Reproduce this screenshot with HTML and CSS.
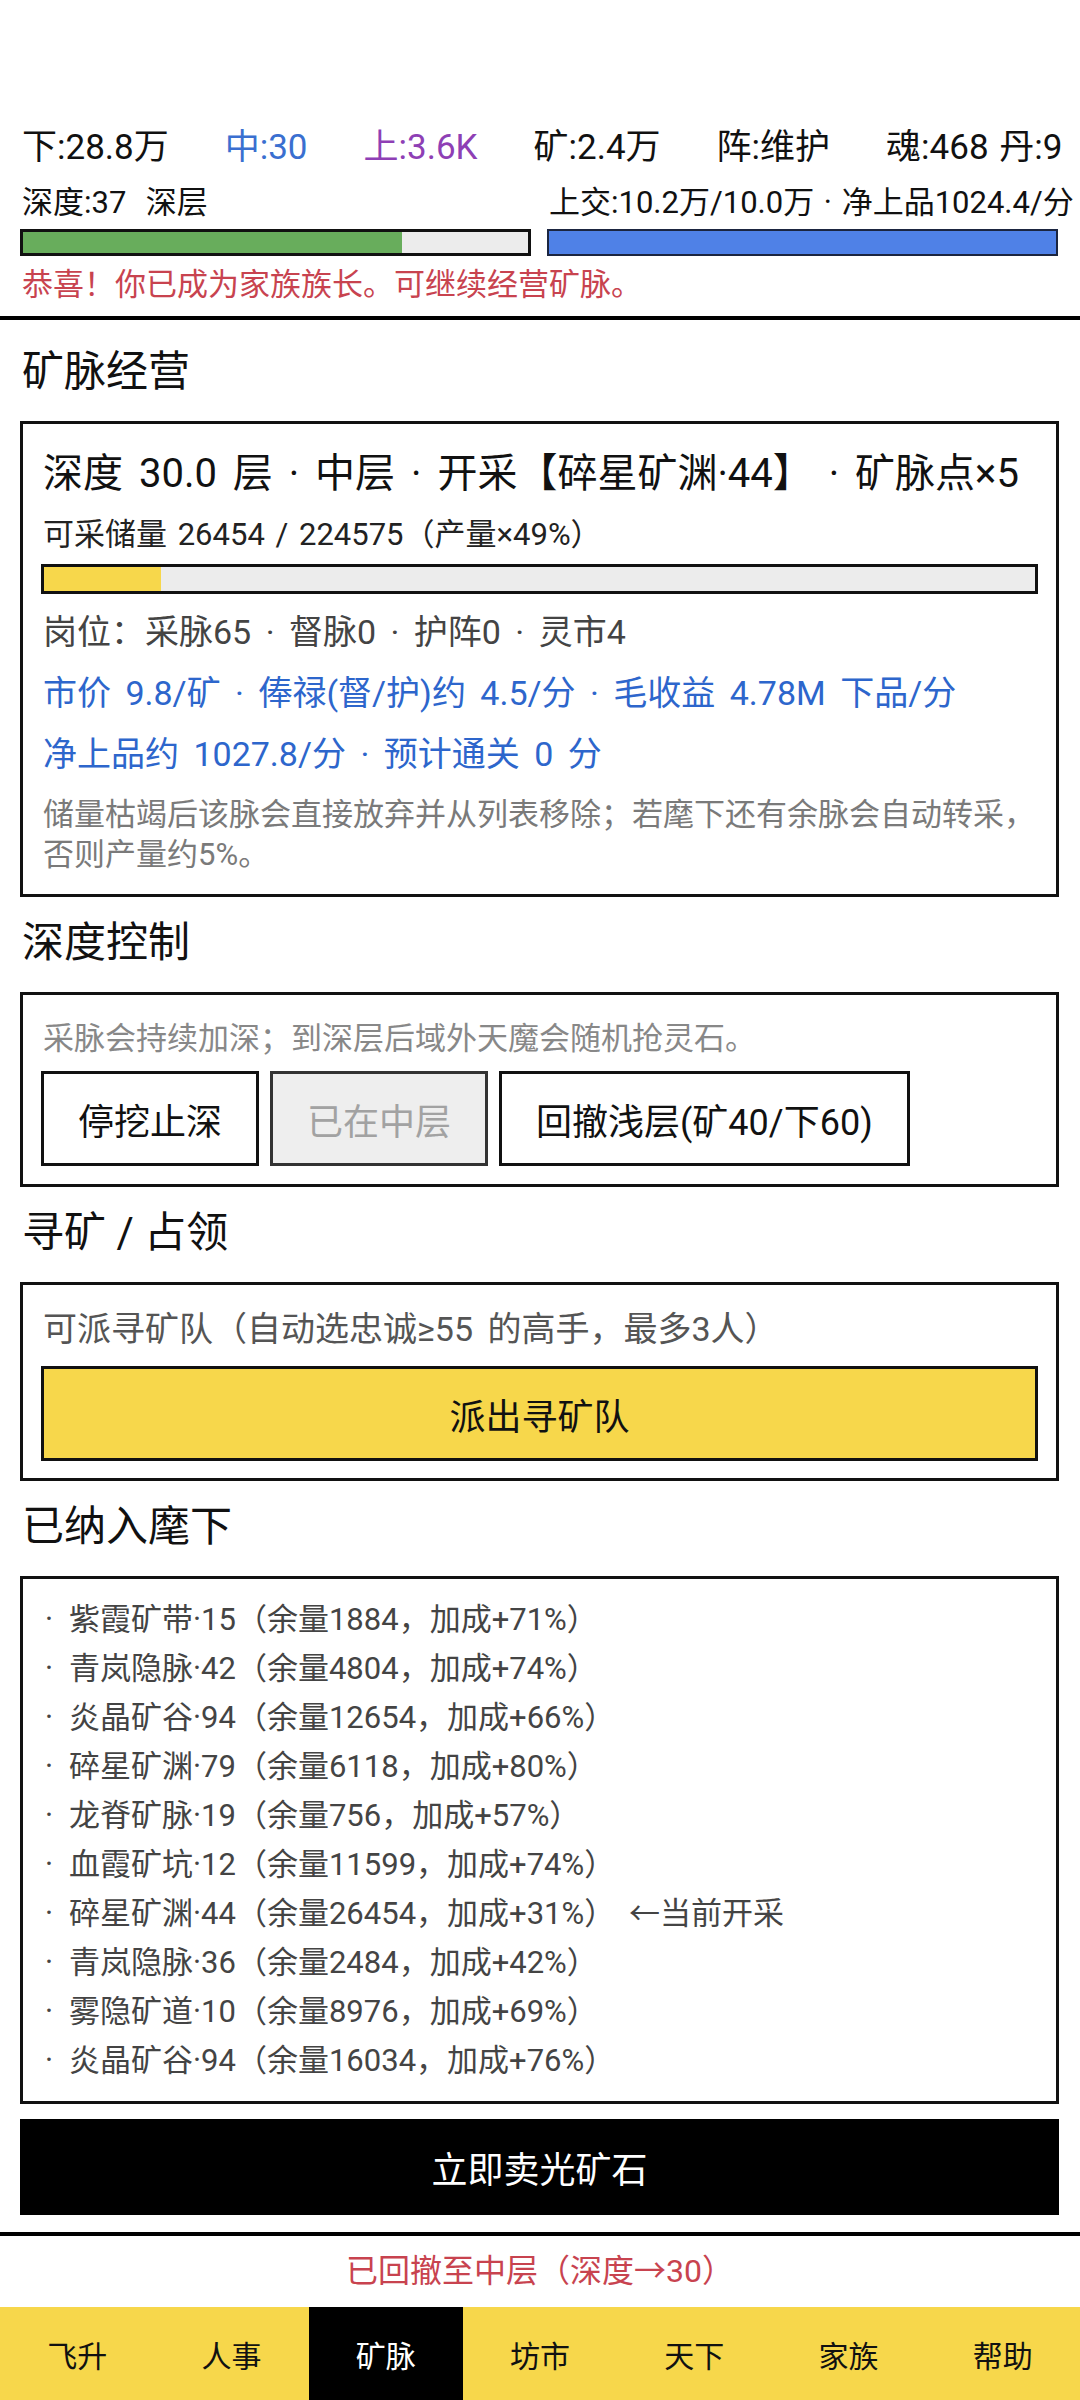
FILE: index.html
```html
<!DOCTYPE html>
<html lang="zh-CN">
<head>
    <meta charset="UTF-8">
    <meta name="viewport" content="width=device-width, initial-scale=1.0">
    <title>矿脉经营</title>
    <link rel="stylesheet" href="styles.css">
</head>
<body>
    <div class="app">
        <header class="topbar">
            <div class="stats">
                <span>下:28.8万</span>
                <span class="stat-mid">中:30</span>
                <span class="stat-high">上:3.6K</span>
                <span>矿:2.4万</span>
                <span>阵:维护</span>
                <span>魂:468 丹:9</span>
            </div>
            <div class="progress-row">
                <div class="progress-col">
                    <div class="progress-label">深度:37&nbsp;&nbsp;深层</div>
                    <div class="meter"><div class="meter-fill green" style="width: 75%"></div></div>
                </div>
                <div class="progress-col">
                    <div class="progress-label">上交:10.2万/10.0万 · 净上品1024.4/分</div>
                    <div class="meter meter-blue"><div class="meter-fill blue" style="width: 100%"></div></div>
                </div>
            </div>
            <p class="notice">恭喜！你已成为家族族长。可继续经营矿脉。</p>
        </header>

        <main class="content">
            <section>
                <h2 class="section-title">矿脉经营</h2>
                <div class="card card-main">
                    <div class="vein-title">深度 30.0 层 · 中层 · 开采【碎星矿渊·44】 · 矿脉点×5</div>
                    <div class="reserve">可采储量 26454 / 224575（产量×49%）</div>
                    <div class="reserve-bar"><div class="reserve-fill" style="width: 11.8%"></div></div>
                    <div class="stat-line">岗位：采脉65 · 督脉0 · 护阵0 · 灵市4</div>
                    <div class="stat-line info">市价 9.8/矿 · 俸禄(督/护)约 4.5/分 · 毛收益 4.78M 下品/分</div>
                    <div class="stat-line info">净上品约 1027.8/分 · 预计通关 0 分</div>
                    <p class="hint">储量枯竭后该脉会直接放弃并从列表移除；若麾下还有余脉会自动转采，否则产量约5%。</p>
                </div>
            </section>

            <section>
                <h2 class="section-title">深度控制</h2>
                <div class="card card-depth">
                    <p class="muted">采脉会持续加深；到深层后域外天魔会随机抢灵石。</p>
                    <div class="btn-row">
                        <button class="btn">停挖止深</button>
                        <button class="btn" disabled>已在中层</button>
                        <button class="btn">回撤浅层(矿40/下60)</button>
                    </div>
                </div>
            </section>

            <section>
                <h2 class="section-title">寻矿 / 占领</h2>
                <div class="card card-scout">
                    <p class="scout-text">可派寻矿队（自动选忠诚≥55 的高手，最多3人）</p>
                    <button class="btn btn-yellow">派出寻矿队</button>
                </div>
            </section>

            <section>
                <h2 class="section-title">已纳入麾下</h2>
                <ul class="card vein-list">
                    <li>紫霞矿带·15（余量1884，加成+71%）</li>
                    <li>青岚隐脉·42（余量4804，加成+74%）</li>
                    <li>炎晶矿谷·94（余量12654，加成+66%）</li>
                    <li>碎星矿渊·79（余量6118，加成+80%）</li>
                    <li>龙脊矿脉·19（余量756，加成+57%）</li>
                    <li>血霞矿坑·12（余量11599，加成+74%）</li>
                    <li>碎星矿渊·44（余量26454，加成+31%） ←当前开采</li>
                    <li>青岚隐脉·36（余量2484，加成+42%）</li>
                    <li>雾隐矿道·10（余量8976，加成+69%）</li>
                    <li>炎晶矿谷·94（余量16034，加成+76%）</li>
                </ul>
            </section>

            <button class="btn btn-sell">立即卖光矿石</button>
        </main>

        <footer class="bottom">
            <div class="footer-msg">已回撤至中层（深度→30）</div>
            <nav class="tabs">
                <a class="tab">飞升</a>
                <a class="tab">人事</a>
                <a class="tab active">矿脉</a>
                <a class="tab">坊市</a>
                <a class="tab">天下</a>
                <a class="tab">家族</a>
                <a class="tab">帮助</a>
            </nav>
        </footer>
    </div>
</body>
</html>
```

FILE: styles.css
```css
:root {
    --ink: #111;
    --yellow: #f7d74b;
    --blue-text: #2d66cc;
    --red: #c8434f;
    --border: 3px solid #111;
}

* {
    box-sizing: border-box;
}

body {
    margin: 0;
    font-family: Roboto, "Noto Sans CJK SC", sans-serif;
    word-spacing: 6px;
    color: var(--ink);
    background: #fff;
}

.app {
    height: 100vh;
    display: flex;
    flex-direction: column;
    overflow: hidden;
}

/* top status */
.topbar {
    flex: none;
    padding: 124px 22px 11px 20px;
    border-bottom: 4px solid #000;
    white-space: nowrap;
    overflow: hidden;
}

.stats {
    display: flex;
    gap: 56px;
    font-size: 35px;
    line-height: 48px;
    padding-left: 2px;
    word-spacing: 2px;
}

.stat-mid {
    color: #3a6fd0;
}

.stat-high {
    color: #8e3fb5;
}

.progress-row {
    display: grid;
    grid-template-columns: 1fr 1fr;
    column-gap: 16px;
    margin-top: 11px;
}

.progress-col {
    min-width: 0;
}

.progress-label {
    font-size: 31px;
    line-height: 40px;
    padding-left: 2px;
    word-spacing: 2px;
}

.meter {
    margin-top: 6px;
    height: 27px;
    border: var(--border);
    background: #ececec;
}

.meter-blue {
    border: 2px solid #1b2540;
}

.meter-fill {
    height: 100%;
}

.green {
    background: #68ad5c;
}

.blue {
    background: #4f81e7;
}

.notice {
    margin: 9px 0 0;
    padding-left: 2px;
    font-size: 31px;
    line-height: 40px;
    color: var(--red);
}

/* content */
.content {
    flex: 1;
    padding: 6px 21px 0 20px;
}

.section-title {
    margin: 18px 0 21px;
    padding-left: 2px;
    font-size: 42px;
    line-height: 56px;
    font-weight: 400;
    word-spacing: 0;
}

.card {
    border: var(--border);
    background: #fff;
}

.card-main {
    padding: 24px 18px 19px;
}

.vein-title {
    font-size: 40px;
    line-height: 52px;
    padding-left: 2px;
    white-space: nowrap;
}

.reserve {
    margin-top: 15px;
    padding-left: 2px;
    font-size: 31px;
    line-height: 40px;
    color: #222;
    word-spacing: 3px;
}

.reserve-bar {
    margin-top: 9px;
    height: 30px;
    border: var(--border);
    background: #ececec;
}

.reserve-fill {
    height: 100%;
    background: var(--yellow);
}

.stat-line {
    padding-left: 2px;
    font-size: 34px;
    line-height: 61px;
    color: #444;
}

.reserve-bar + .stat-line {
    margin-top: 8px;
}

.stat-line.info {
    color: var(--blue-text);
}

.hint {
    margin: 10px 0 0;
    padding-left: 2px;
    font-size: 31px;
    line-height: 40px;
    color: #7a7a7a;
}

.card-depth {
    padding: 24px 18px 18px;
}

.muted {
    margin: 0;
    padding-left: 2px;
    font-size: 31px;
    line-height: 40px;
    color: #888;
}

.btn-row {
    display: flex;
    gap: 11px;
    margin-top: 12px;
}

.btn {
    height: 95px;
    padding: 0 34px;
    border: var(--border);
    background: #fff;
    color: var(--ink);
    font-family: inherit;
    font-size: 36px;
    word-spacing: inherit;
    border-radius: 0;
}

.btn:disabled {
    background: #eee;
    color: #a2a2a2;
    border-color: #333;
}

.card-scout {
    padding: 24px 18px 17px;
}

.scout-text {
    margin: 0;
    padding-left: 2px;
    font-size: 34px;
    line-height: 40px;
    color: #555;
}

.btn-yellow {
    display: block;
    width: 100%;
    margin-top: 17px;
    background: var(--yellow);
}

.vein-list {
    margin: 0;
    padding: 16px 18px 16px 20px;
    list-style: none;
}

.vein-list li {
    font-size: 31px;
    line-height: 49px;
    color: #444;
}

.vein-list li::before {
    content: '·';
    display: inline-block;
    width: 24px;
    padding-left: 2px;
}

.btn-sell {
    display: block;
    width: 100%;
    height: 96px;
    margin-top: 15px;
    border: none;
    background: #000;
    color: #fff;
}

/* bottom */
.bottom {
    flex: none;
    border-top: 4px solid #000;
}

.footer-msg {
    text-align: center;
    font-size: 32px;
    line-height: 71px;
    color: var(--red);
}

.tabs {
    display: grid;
    grid-template-columns: repeat(7, 1fr);
    height: 93px;
    background: var(--yellow);
}

.tab {
    display: flex;
    align-items: center;
    justify-content: center;
    font-size: 30px;
    color: var(--ink);
}

.tab.active {
    background: #000;
    color: #fff;
}
```
